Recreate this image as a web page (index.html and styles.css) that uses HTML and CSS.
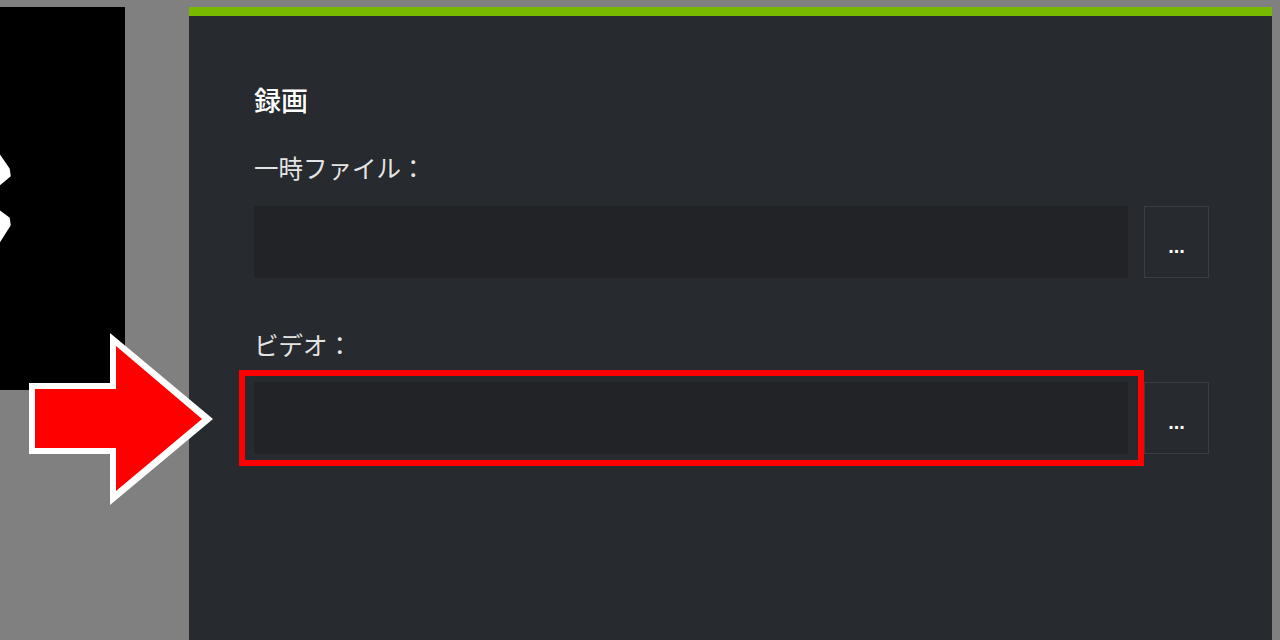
FILE: index.html
```html
<!DOCTYPE html>
<html lang="ja">
<head>
<meta charset="utf-8">
<link rel="stylesheet" href="styles.css">
</head>
<body>
<div class="stage">
  <div class="black-panel">
    <svg class="chevrons" width="20" height="120" viewBox="0 140 20 120">
      <polygon points="-2,153 9,169 10,176 -2,186" fill="#fff" stroke="#fff" stroke-width="1.5" stroke-linejoin="round"/>
      <polygon points="-2,210 9,218 10,225 -2,244" fill="#fff" stroke="#fff" stroke-width="1.5" stroke-linejoin="round"/>
    </svg>
  </div>
  <div class="panel">
    <h1 class="title">録画</h1>
    <div class="field">
      <div class="label">一時ファイル：</div>
      <div class="row">
        <div class="input"></div>
        <div class="browse">...</div>
      </div>
    </div>
    <div class="field field-video">
      <div class="label">ビデオ：</div>
      <div class="row">
        <div class="input"></div>
        <div class="browse">...</div>
      </div>
    </div>
  </div>
  <div class="highlight"></div>
  <svg class="arrow" width="200" height="190" viewBox="20 325 200 190">
    <polygon points="29,383 110,383 110,333 213,419 110,505 110,454 29,454" fill="#fff"/>
    <polygon points="35,389 116,389 116,346 202,419 116,491 116,448 35,448" fill="#ff0000"/>
  </svg>
</div>
</body>
</html>
```

FILE: styles.css
```css
html, body {
  margin: 0;
  padding: 0;
}
body {
  background: #808080;
  width: 1280px;
  height: 640px;
  overflow: hidden;
  font-family: "Noto Sans CJK JP", "Noto Sans", sans-serif;
}
.stage {
  position: relative;
  display: flex;
  align-items: flex-start;
  padding-top: 7px;
  height: 633px;
}
.black-panel {
  position: relative;
  width: 125px;
  height: 383px;
  background: #000;
  flex: none;
  overflow: hidden;
}
.chevrons {
  position: absolute;
  left: 0;
  top: 133px;
}
.panel {
  margin-left: 64px;
  width: 1083px;
  height: 640px;
  background: #272a2e;
  border-top: 9px solid #76b900;
  box-sizing: border-box;
  padding: 68px 63px 0 65px;
}
.title {
  margin: 0;
  font-size: 27px;
  line-height: 32px;
  font-weight: 500;
  color: #ffffff;
}
.field {
  margin-top: 37px;
}
.field-video {
  margin-top: 52px;
}
.label {
  font-size: 24.5px;
  line-height: 30px;
  color: #e4e4e4;
  font-weight: 400;
}
.row {
  display: flex;
  gap: 16px;
  margin-top: 23px;
}
.field-video .row {
  margin-top: 22px;
}
.input {
  flex: 1;
  height: 72px;
  background: #212326;
}
.browse {
  width: 65px;
  height: 72px;
  box-sizing: border-box;
  border: 1px solid #3a3d41;
  display: flex;
  align-items: center;
  justify-content: center;
  color: #fff;
  font-family: "Liberation Sans", sans-serif;
  font-weight: bold;
  font-size: 20px;
  padding-top: 8px;
}
.highlight {
  position: absolute;
  left: 239px;
  top: 370px;
  width: 905px;
  height: 96px;
  box-sizing: border-box;
  border: 6px solid #ff0000;
}
.arrow {
  position: absolute;
  left: 20px;
  top: 325px;
}
```
